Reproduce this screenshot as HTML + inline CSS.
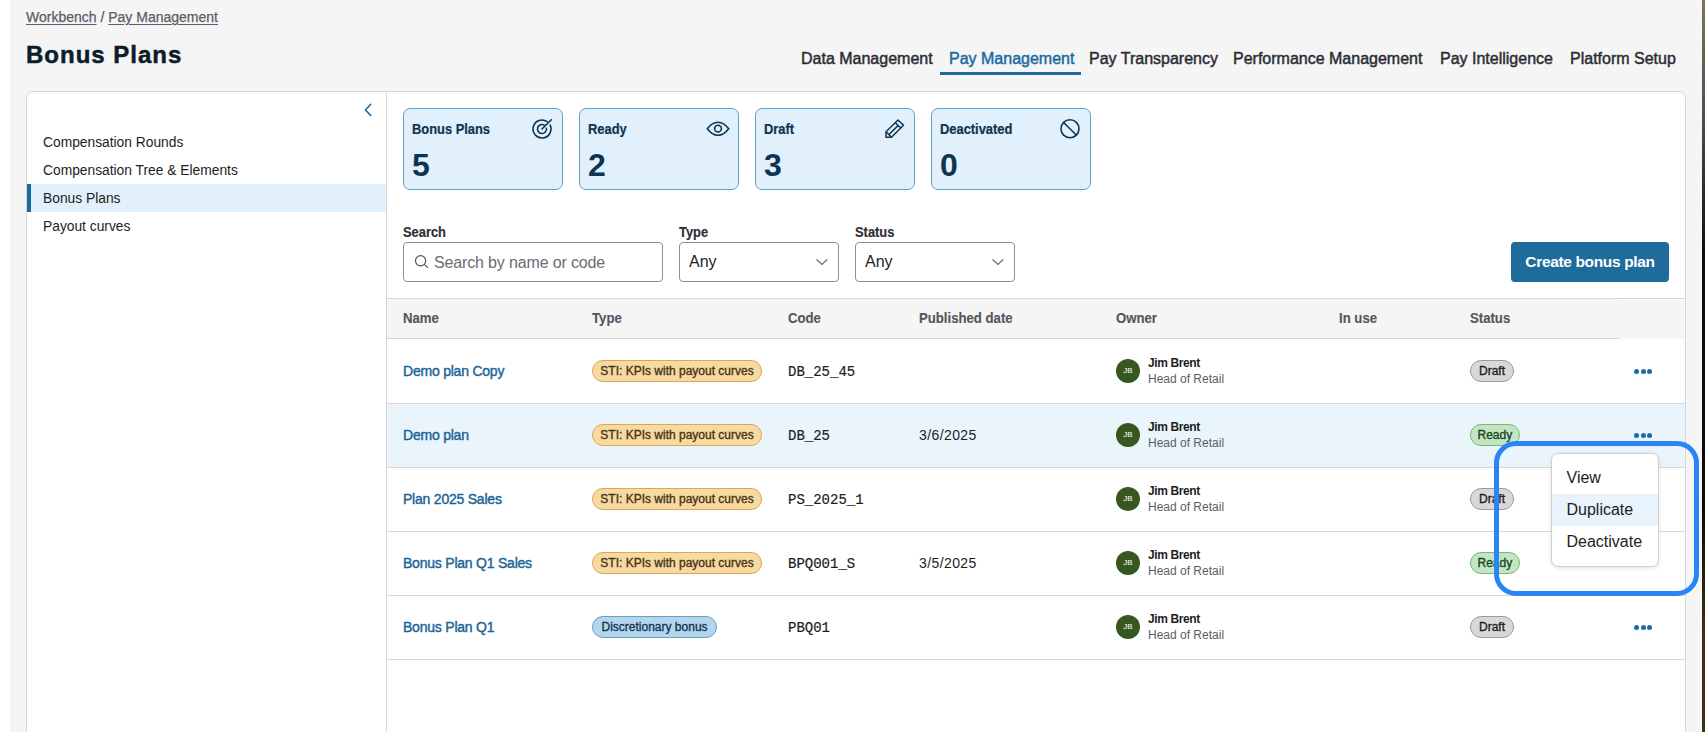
<!DOCTYPE html>
<html><head><meta charset="utf-8">
<style>
*{box-sizing:border-box;margin:0;padding:0}
html,body{width:1705px;height:732px;overflow:hidden;background:#fff}
body{font-family:"Liberation Sans",sans-serif;position:relative;color:#1a1a1a}
.abs{position:absolute;white-space:nowrap}
#bg{position:absolute;left:10px;top:0;width:1692px;height:732px;background:#f5f5f5}
#strip{position:absolute;left:1702px;top:0;width:3px;height:732px;background:linear-gradient(#7d7165,#5a5048 15%,#0e0c0a 35%,#0b0a08 70%,#3a2e18 85%,#3b3015)}
.crumb{font-size:14px;color:#5c5c66;top:9px;-webkit-text-stroke:0.25px #5c5c66}
.crumb u{text-decoration:underline;text-underline-offset:2px}
#title{left:26px;top:41.4px;font-size:24px;font-weight:700;color:#0c1d2a;letter-spacing:1px;-webkit-text-stroke:0.5px #0c1d2a}
.nav{top:50px;font-size:16px;color:#2b2d33;-webkit-text-stroke:0.45px #2b2d33}
.nav.act{color:#1c6b9f;-webkit-text-stroke:0.45px #1c6b9f}
#navline{left:940px;top:72px;width:141px;height:3px;background:#1c6b9f}
#card{position:absolute;left:26px;top:91px;width:1660px;height:700px;background:#fff;border:1px solid #d6d6d8;border-radius:7px}
#sidebr{position:absolute;left:386px;top:92px;width:1px;height:640px;background:#d6d6d8}
.side{left:43px;font-size:13.8px;color:#1d1d1f}
#sideact{position:absolute;left:27px;top:184px;width:359px;height:28px;background:#e1f0fa}
#sidebar4{position:absolute;left:27px;top:184px;width:4px;height:28px;background:#1c6b9f}
.stat{position:absolute;top:108px;width:160px;height:82px;background:#e1f0fa;border:1px solid #5fa3cf;border-radius:7px}
.stat .lb{position:absolute;left:8px;top:12px;font-size:14px;transform:scaleX(0.92);transform-origin:0 0;-webkit-text-stroke:0.2px #0d3553;font-weight:700;color:#0d3553}
.stat .num{position:absolute;left:8px;top:38px;font-size:32px;font-weight:700;color:#0d3553}
.stat svg{position:absolute}
.flbl{top:224px;font-size:14px;transform:scaleX(0.92);transform-origin:0 0;-webkit-text-stroke:0.15px #2b2d33;font-weight:700;color:#2b2d33}
.inp{position:absolute;top:242px;height:40px;border:1px solid #8d8d93;border-radius:4px;background:#fff}
.inp .tx{position:absolute;top:10.5px;font-size:16px;color:#1d1d1f}
#btn{position:absolute;left:1511px;top:242px;width:158px;height:40px;background:#1f6b9c;border-radius:4px;color:#fff;font-size:15.5px;letter-spacing:-0.35px;font-weight:700;text-align:center;line-height:39px}
#thead{position:absolute;left:387px;top:298px;width:1298px;height:41px;background:#f5f5f5;border-top:1px solid #d6d6d8}
#theadw{position:absolute;left:1619px;top:299px;width:66px;height:1px;background:#fff}
#theadb{position:absolute;left:387px;top:338px;width:1232px;height:1px;background:#d6d6d8}
.th{top:309.7px;font-size:14px;transform:scaleX(0.94);transform-origin:0 0;-webkit-text-stroke:0.15px #55565d;font-weight:700;color:#55565d}
.row{position:absolute;left:387px;width:1298px;height:64.2px;border-bottom:1px solid #d6d6d8}
.nm{font-size:14px;color:#1a6496;-webkit-text-stroke:0.4px #1a6496;letter-spacing:-0.22px}
.tb{position:absolute;height:22px;border-radius:11px;font-size:12px;line-height:20px;padding:0 8px;white-space:nowrap;-webkit-text-stroke:0.15px currentColor}
.sti{background:#f7d9a2;border:1px solid #e2a555;color:#4a3312;letter-spacing:0;padding:0 7.3px !important;-webkit-text-stroke:0.35px #4a3312 !important}
.disc{background:#b4d6ec;border:1px solid #5fa3cf;color:#10324d;padding:0 8.5px !important;-webkit-text-stroke:0.3px #10324d !important}
.code{font-family:"Liberation Mono",monospace;font-size:14px;color:#1d1d1f;-webkit-text-stroke:0.2px #1d1d1f}
.pub{font-size:14px;color:#1d1d1f;letter-spacing:0.4px}
.av{position:absolute;width:24px;height:24px;border-radius:12px;background:#38561f;color:#fff;font-size:8px;text-align:center;line-height:24px}
.on{font-size:12px;font-weight:700;color:#1d1d1f;letter-spacing:-0.4px}
.or{font-size:12px;color:#5c5c66}
.st{position:absolute;height:22px;border-radius:11px;font-size:12px;line-height:20px;padding:0 8px;white-space:nowrap;-webkit-text-stroke:0.35px currentColor}
.draft{background:#d8d8da;border:1px solid #9b9ba0;color:#1d1d1f}
.ready{background:#c4e5c4;border:1px solid #6fbd6f;color:#14461a;padding:0 6.5px !important}
.dots{position:absolute;width:18px;height:5px}
.dots i{position:absolute;top:0;width:5px;height:5px;border-radius:3px;background:#1c6b9f}
#menu{position:absolute;left:1550.5px;top:453px;width:108px;height:114px;background:#fff;border:1px solid #d0d0d4;border-radius:7px;box-shadow:0 1px 4px rgba(0,0,0,.12)}
#menu .it{position:absolute;left:15px;font-size:16px;color:#1d1d1f}
#menuhl{position:absolute;left:0;top:40px;width:106px;height:32px;background:#e8f3fb}
#ring{position:absolute;left:1494px;top:441px;width:205px;height:155px;border:5px solid #2a84f5;border-radius:22px}
</style></head><body>
<div id="bg"></div>
<div id="strip"></div>

<div class="abs crumb" style="left:26px"><u>Workbench</u> / <u>Pay Management</u></div>
<div class="abs" id="title">Bonus Plans</div>

<div class="abs nav" style="left:801px">Data Management</div>
<div class="abs nav act" style="left:949px">Pay Management</div>
<div class="abs nav" style="left:1089px">Pay Transparency</div>
<div class="abs nav" style="left:1233px">Performance Management</div>
<div class="abs nav" style="left:1440px">Pay Intelligence</div>
<div class="abs nav" style="left:1570px">Platform Setup</div>
<div class="abs" id="navline"></div>

<div id="card"></div>
<div id="sidebr"></div>
<svg class="abs" style="left:362px;top:103px" width="12" height="15" viewBox="0 0 12 15"><path d="M8.7 1.3 L3.4 7 L8.7 12.4" fill="none" stroke="#1a6496" stroke-width="1.5" stroke-linecap="round" stroke-linejoin="round"/></svg>
<div class="abs side" style="top:135px">Compensation Rounds</div>
<div class="abs side" style="top:163px">Compensation Tree &amp; Elements</div>
<div id="sideact"></div><div id="sidebar4"></div>
<div class="abs side" style="top:191px">Bonus Plans</div>
<div class="abs side" style="top:219px">Payout curves</div>

<div class="stat" style="left:403px"><div class="lb">Bonus Plans</div><div class="num">5</div></div>
<div class="stat" style="left:579px"><div class="lb">Ready</div><div class="num">2</div></div>
<div class="stat" style="left:755px"><div class="lb">Draft</div><div class="num">3</div></div>
<div class="stat" style="left:931px"><div class="lb">Deactivated</div><div class="num">0</div></div>

<div class="abs flbl" style="left:403px">Search</div>
<div class="abs flbl" style="left:679px">Type</div>
<div class="abs flbl" style="left:855px">Status</div>
<div class="inp" style="left:403px;width:260px"><div class="tx" style="left:30px;color:#6b6b73;letter-spacing:-0.15px">Search by name or code</div></div>
<div class="inp" style="left:679px;width:160px"><div class="tx" style="left:9px;top:9.5px">Any</div></div>
<div class="inp" style="left:855px;width:160px"><div class="tx" style="left:9px;top:9.5px">Any</div></div>
<svg class="abs" style="left:532px;top:119px" width="20" height="20" viewBox="0 0 20 20" fill="none" stroke="#0d3553" stroke-width="1.6" stroke-linecap="round"><path d="M18.16 6.2 A9 9 0 1 1 15.16 2.63"/><path d="M14.43 9.22 A4.5 4.5 0 1 1 12.38 6.18"/><path d="M10 10 L19.3 0.7"/></svg>
<svg class="abs" style="left:706px;top:121px" width="24" height="16" viewBox="0 0 24 16" fill="none" stroke="#0d3553" stroke-width="1.6"><path d="M1.3 7.8 C4.5 3.5 8 1.3 12 1.3 C16 1.3 19.5 3.5 22.7 7.8 C19.5 12.1 16 14.3 12 14.3 C8 14.3 4.5 12.1 1.3 7.8 Z"/><circle cx="12" cy="7.6" r="3.4"/></svg>
<svg class="abs" style="left:885px;top:119px" width="20" height="20" viewBox="0 0 20 20" fill="none" stroke="#0d3553" stroke-width="1.5" stroke-linejoin="round"><path d="M13 1 L18.5 6.3 L6.5 18.3 L1 18.3 L1 12.8 Z"/><path d="M10.3 3.7 L15.8 9"/><path d="M4 15.5 L13.2 6.4"/><path d="M1.3 13 L6.3 18"/></svg>
<svg class="abs" style="left:1060px;top:119px" width="20" height="20" viewBox="0 0 20 20" fill="none" stroke="#0d3553" stroke-width="1.6"><circle cx="10" cy="9.8" r="9"/><path d="M3.6 3.5 L16.5 16.2"/></svg>
<svg class="abs" style="left:413px;top:253px" width="18" height="18" viewBox="0 0 18 18" fill="none" stroke="#55565c" stroke-width="1.2" stroke-linecap="round"><circle cx="7.6" cy="7.7" r="5.1"/><path d="M11.4 11.6 L14.6 14.4"/></svg>
<svg class="abs" style="left:814px;top:257px" width="16" height="10" viewBox="0 0 16 10" fill="none" stroke="#6b6b70" stroke-width="1.3"><path d="M2.5 2.4 L8 7.4 L13.3 2.4"/></svg>
<svg class="abs" style="left:990px;top:257px" width="16" height="10" viewBox="0 0 16 10" fill="none" stroke="#6b6b70" stroke-width="1.3"><path d="M2.5 2.4 L8 7.4 L13.3 2.4"/></svg>
<div id="btn">Create bonus plan</div>

<div id="thead"></div><div id="theadw"></div><div id="theadb"></div>
<div class="abs th" style="left:403px">Name</div>
<div class="abs th" style="left:592px">Type</div>
<div class="abs th" style="left:788px">Code</div>
<div class="abs th" style="left:919px">Published date</div>
<div class="abs th" style="left:1116px">Owner</div>
<div class="abs th" style="left:1339px">In use</div>
<div class="abs th" style="left:1470px">Status</div>




<!--ROWS-->
<div class="row" style="top:339px;height:65px;background:#fff"></div>
<div class="abs nm" style="left:403px;top:362.5px">Demo plan Copy</div>
<div class="tb sti" style="left:592px;top:360.0px">STI: KPIs with payout curves</div>
<div class="abs code" style="left:788px;top:363.5px">DB_25_45</div>
<div class="av" style="left:1116px;top:359.0px">JB</div>
<div class="abs on" style="left:1148px;top:356.0px">Jim Brent</div>
<div class="abs or" style="left:1148px;top:372.0px">Head of Retail</div>
<div class="st draft" style="left:1470px;top:360.0px">Draft</div>
<div class="dots" style="left:1634px;top:368.5px"><i style="left:0"></i><i style="left:6.5px"></i><i style="left:13px"></i></div>
<div class="row" style="top:404px;height:64px;background:#eaf4fb"></div>
<div class="abs nm" style="left:403px;top:426.5px">Demo plan</div>
<div class="tb sti" style="left:592px;top:424.0px">STI: KPIs with payout curves</div>
<div class="abs code" style="left:788px;top:427.5px">DB_25</div>
<div class="abs pub" style="left:919px;top:426.5px">3/6/2025</div>
<div class="av" style="left:1116px;top:423.0px">JB</div>
<div class="abs on" style="left:1148px;top:420.0px">Jim Brent</div>
<div class="abs or" style="left:1148px;top:436.0px">Head of Retail</div>
<div class="st ready" style="left:1470px;top:424.0px">Ready</div>
<div class="dots" style="left:1634px;top:432.5px"><i style="left:0"></i><i style="left:6.5px"></i><i style="left:13px"></i></div>
<div class="row" style="top:468px;height:64px;background:#fff"></div>
<div class="abs nm" style="left:403px;top:490.5px">Plan 2025 Sales</div>
<div class="tb sti" style="left:592px;top:488.0px">STI: KPIs with payout curves</div>
<div class="abs code" style="left:788px;top:491.5px">PS_2025_1</div>
<div class="av" style="left:1116px;top:487.0px">JB</div>
<div class="abs on" style="left:1148px;top:484.0px">Jim Brent</div>
<div class="abs or" style="left:1148px;top:500.0px">Head of Retail</div>
<div class="st draft" style="left:1470px;top:488.0px">Draft</div>
<div class="row" style="top:532px;height:64px;background:#fff"></div>
<div class="abs nm" style="left:403px;top:554.5px">Bonus Plan Q1 Sales</div>
<div class="tb sti" style="left:592px;top:552.0px">STI: KPIs with payout curves</div>
<div class="abs code" style="left:788px;top:555.5px">BPQ001_S</div>
<div class="abs pub" style="left:919px;top:554.5px">3/5/2025</div>
<div class="av" style="left:1116px;top:551.0px">JB</div>
<div class="abs on" style="left:1148px;top:548.0px">Jim Brent</div>
<div class="abs or" style="left:1148px;top:564.0px">Head of Retail</div>
<div class="st ready" style="left:1470px;top:552.0px">Ready</div>
<div class="row" style="top:596px;height:64px;background:#fff"></div>
<div class="abs nm" style="left:403px;top:618.5px">Bonus Plan Q1</div>
<div class="tb disc" style="left:592px;top:616.0px">Discretionary bonus</div>
<div class="abs code" style="left:788px;top:619.5px">PBQ01</div>
<div class="av" style="left:1116px;top:615.0px">JB</div>
<div class="abs on" style="left:1148px;top:612.0px">Jim Brent</div>
<div class="abs or" style="left:1148px;top:628.0px">Head of Retail</div>
<div class="st draft" style="left:1470px;top:616.0px">Draft</div>
<div class="dots" style="left:1634px;top:624.5px"><i style="left:0"></i><i style="left:6.5px"></i><i style="left:13px"></i></div>
<div id="menu"><div id="menuhl"></div><div class="it" style="top:15px">View</div><div class="it" style="top:47px">Duplicate</div><div class="it" style="top:79px">Deactivate</div></div>
<div id="ring"></div>
<!--/ROWS-->
</body></html>
